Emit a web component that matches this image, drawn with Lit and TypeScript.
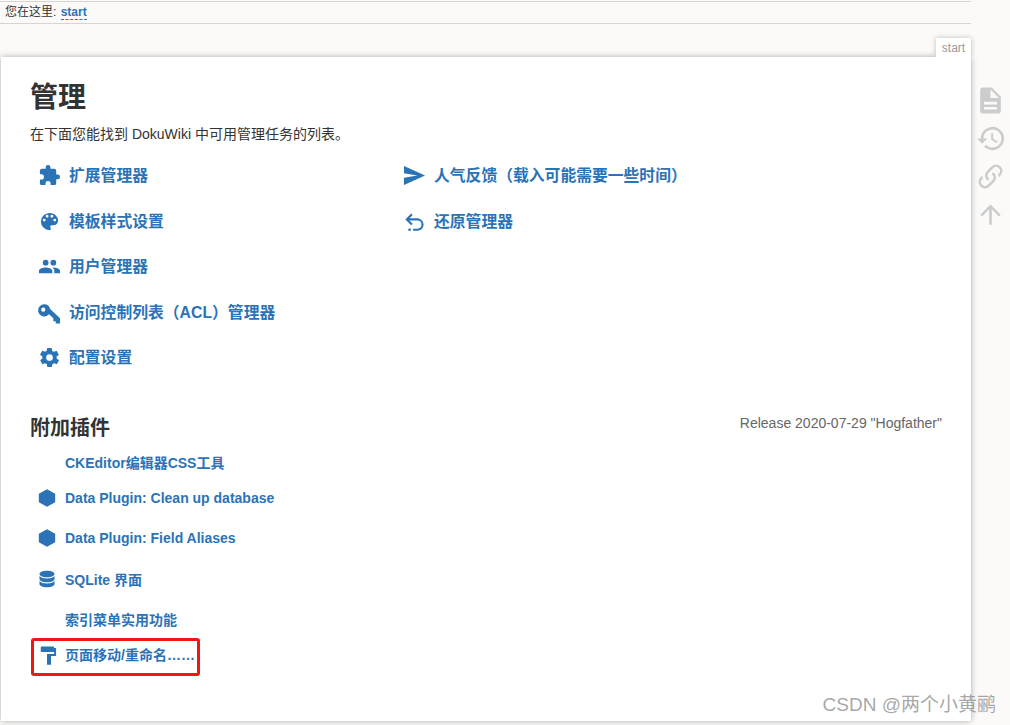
import { LitElement, html, css, svg } from "lit";
import { customElement } from "lit/decorators.js";

const ICONS: Record<string, any> = {
  puzzle: svg`<path d="M20.500 11H19V7a2 2 0 0 0-2-2h-4V3.500a2.500 2.500 0 0 0-5 0V5H4a2 2 0 0 0-2 2v3.800h1.500a2.700 2.700 0 0 1 0 5.400H2V20a2 2 0 0 0 2 2h3.800v-1.500a2.700 2.700 0 0 1 5.400 0V22H17a2 2 0 0 0 2-2v-4h1.500a2.500 2.500 0 0 0 0-5z"/>`,
  palette: svg`<path d="M12 3a9 9 0 0 0 0 18 1.500 1.500 0 0 0 1.100-2.500 1.500 1.500 0 0 1 1.100-2.500H16a5 5 0 0 0 5-5c0-4.400-4-8-9-8zM6.500 12a1.500 1.500 0 1 1 0-3 1.500 1.500 0 0 1 0 3zm3-4a1.500 1.500 0 1 1 0-3 1.500 1.500 0 0 1 0 3zm5 0a1.500 1.500 0 1 1 0-3 1.500 1.500 0 0 1 0 3zm3 4a1.500 1.500 0 1 1 0-3 1.500 1.500 0 0 1 0 3z"/>`,
  users: svg`<path d="M16 11a3 3 0 1 0 0-6 3 3 0 0 0 0 6zm-8 0a3 3 0 1 0 0-6 3 3 0 0 0 0 6zm0 2c-2.300 0-7 1.200-7 3.500V19h14v-2.500C15 14.200 10.300 13 8 13zm8 0h-1c1.200.8 2 2 2 3.500V19h6v-2.500c0-2.300-4.700-3.500-7-3.500z"/>`,
  key: svg`<path fill-rule="evenodd" d="M6.600 3.500a6.300 6.300 0 0 1 6.100 4.900L23 18v5.500h-4.500v-2.500H16v-3l-4.600-4.300A6.300 6.300 0 1 1 6.600 3.500zM5.500 6.800a2.200 2.200 0 1 0 0 4.400 2.200 2.200 0 0 0 0-4.400z"/>`,
  gear: svg`<path d="M12 15.500a3.500 3.500 0 1 1 0-7 3.500 3.500 0 0 1 0 7zm7.400-2.500a7.800 7.800 0 0 0 0-2l2.100-1.600a.5.500 0 0 0 .1-.6l-2-3.500a.5.500 0 0 0-.6-.2l-2.500 1a7.300 7.300 0 0 0-1.700-1l-.4-2.600A.5.500 0 0 0 14 2h-4a.5.500 0 0 0-.5.4l-.4 2.600a7.300 7.300 0 0 0-1.700 1l-2.500-1a.5.500 0 0 0-.6.2l-2 3.500a.5.500 0 0 0 .1.600L4.600 11a7.800 7.800 0 0 0 0 2l-2.100 1.600a.5.500 0 0 0-.1.600l2 3.500c.1.200.4.300.6.200l2.500-1c.5.400 1.100.7 1.700 1l.4 2.600c0 .2.200.4.500.4h4c.3 0 .5-.2.500-.4l.4-2.600c.6-.3 1.200-.6 1.700-1l2.500 1c.2.100.5 0 .6-.2l2-3.500a.5.500 0 0 0-.1-.6z"/>`,
  send: svg`<path d="M1 2L23 12 1 22V14.300L15 12 1 9.700z"/>`,
  undo: svg`<path fill="none" stroke="currentColor" stroke-width="2.200" d="M9.300 4.500L4 9.800l5.300 5.300M4 9.800h11a5.400 5.400 0 0 1 0 10.800h-4.500"/><rect x="5.600" y="19.300" width="2.500" height="2.500"/>`,
  hex: svg`<path d="M12 1.600L21.800 7V17L12 22.400 2.200 17V7z"/>`,
  db: svg`<path d="M12 2C6.500 2 3 3.800 3 6s3.500 4 9 4 9-1.800 9-4-3.500-4-9-4zM3 8.500V12c0 2.200 3.500 4 9 4s9-1.800 9-4V8.500c-1.600 2-5 3-9 3s-7.400-1-9-3zM3 14.500V18c0 2.200 3.500 4 9 4s9-1.800 9-4v-3.500c-1.600 2-5 3-9 3s-7.400-1-9-3z"/>`,
  roller: svg`<path d="M5.500 3H19.500a1 1 0 0 1 1 1v.8h2.400V14.400H16.800V25H12V12h8.500V9H20.500a1 1 0 0 1-1 .6H5.500a1 1 0 0 1-1-1V4a1 1 0 0 1 1-1z"/>`,
  file: svg`<path d="M13 2l7 7v11a2 2 0 0 1-2 2H6a2 2 0 0 1-2-2V4a2 2 0 0 1 2-2h7zm-1 1.500V10h6.500L12 3.500zM7 13v2h10v-2H7zm0 4v2h10v-2H7z" fill-rule="evenodd"/>`,
  history: svg`<path d="M13.500 3a9 9 0 0 0-9 9H1.500l3.900 3.900.1.100L9.500 12h-3a7 7 0 1 1 2 4.900l-1.400 1.400A9 9 0 1 0 13.500 3zM12.500 8v5l4.300 2.500.7-1.200-3.500-2.100V8z"/>`,
  link: svg`<path d="M10.600 13.400a1 1 0 0 1 0 1.400 1 1 0 0 1-1.400 0 5 5 0 0 1 0-7.100l3.500-3.500a5 5 0 0 1 7.100 7.100l-1.500 1.500a7 7 0 0 0-.4-2.400l.5-.5a3 3 0 0 0-4.300-4.300l-3.500 3.500a3 3 0 0 0 0 4.300zm2.800-4.200a1 1 0 0 1 1.400 0 5 5 0 0 1 0 7.100l-3.500 3.500a5 5 0 0 1-7.100-7.100l1.500-1.500a7 7 0 0 0 .4 2.400l-.5.500a3 3 0 0 0 4.300 4.300l3.500-3.500a3 3 0 0 0 0-4.300 1 1 0 0 1 0-1.400z"/>`,
  up: svg`<path d="M13 20h-2V8l-5.500 5.500-1.400-1.400L12 4.200l7.900 7.900-1.400 1.400L13 8z"/>`,
};

const icon = (n: string) =>
  html`<svg class="ico" viewBox="0 0 24 24" aria-hidden="true">${ICONS[n]}</svg>`;

const LEFT: [string, string][] = [
  ["puzzle", "扩展管理器"],
  ["palette", "模板样式设置"],
  ["users", "用户管理器"],
  ["key", "访问控制列表（ACL）管理器"],
  ["gear", "配置设置"],
];
const RIGHT: [string, string][] = [
  ["send", "人气反馈（载入可能需要一些时间）"],
  ["undo", "还原管理器"],
];
const PLUGINS: [string, string, number][] = [
  ["", "CKEditor编辑器CSS工具", 30],
  ["hex", "Data Plugin: Clean up database", 41],
  ["hex", "Data Plugin: Field Aliases", 40],
  ["db", "SQLite 界面", 41],
  ["", "索引菜单实用功能", 39],
  ["roller", "页面移动/重命名……", 32],
];

@customElement("app-root")
export class AppRoot extends LitElement {
  static styles = css`
    :host {
      display: block;
      width: 1010px;
      height: 725px;
      overflow: hidden;
      background: #fbfaf9;
      color: #333;
      font-family: "Liberation Sans", "Noto Sans CJK SC", sans-serif;
      position: relative;
    }
    .crumbs {
      box-sizing: border-box;
      margin-top: 1px;
      width: 971px;
      height: 23px;
      border-top: 1px solid #d8d4cf;
      border-bottom: 1px solid #d8d4cf;
      font-size: 12px;
      line-height: 20px;
      padding-left: 5px;
    }
    .crumbs a {
      color: #2b73b7;
      font-weight: bold;
      border-bottom: 1px dashed #2b73b7;
      margin-left: 1px;
    }
    .wrap {
      display: flex;
      align-items: flex-start;
    }
    .main {
      width: 970px;
      margin-left: 1px;
      position: relative;
      margin-top: 33px;
    }
    .tab {
      position: absolute;
      right: 0;
      top: -19px;
      height: 19px;
      width: 35px;
      background: #fff;
      color: #999;
      font-size: 12px;
      line-height: 20px;
      text-align: center;
      box-shadow: 0 0 5px #bbb;
      clip-path: inset(-6px -6px 0 -6px);
    }
    .page {
      box-sizing: border-box;
      height: 664px;
      background: #fff;
      box-shadow: 0 0 6px #aaa;
      padding: 23px 29px 0;
    }
    h1 {
      margin: 0;
      font-size: 28px;
      line-height: 36px;
      font-weight: bold;
      color: #333;
    }
    .intro {
      margin: 9px 0 0;
      font-size: 14px;
      line-height: 18px;
      color: #333;
    }
    .tasks {
      display: flex;
      margin-top: 10px;
    }
    .col {
      width: 365px;
      display: flex;
      flex-direction: column;
    }
    .task {
      height: 45.5px;
      display: flex;
      align-items: center;
      padding-left: 8px;
      gap: 8px;
      font-size: 15.800px;
      font-weight: bold;
      color: #2b73b7;
    }
    .task span {
      padding-bottom: 2.500px;
    }
    .ico {
      fill: currentColor;
      flex: none;
      overflow: visible;
    }
    .task .ico {
      width: 23px;
      height: 23px;
    }
    .add-head {
      display: flex;
      justify-content: space-between;
      margin-top: 34px;
      height: 24px;
    }
    h2 {
      margin: 0;
      font-size: 20px;
      line-height: 26px;
      font-weight: bold;
      color: #333;
    }
    .ver {
      font-size: 14px;
      line-height: 16px;
      color: #666;
    }
    .plugins {
      margin-top: 8.500px;
      display: flex;
      flex-direction: column;
    }
    .plugin {
      position: relative;
      display: flex;
      align-items: center;
      gap: 8px;
      padding-left: 7px;
      font-size: 14px;
      font-weight: bold;
      color: #2b73b7;
    }
    .plugin .ico {
      width: 20px;
      height: 20px;
    }
    .slot {
      width: 20px;
      height: 20px;
      flex: none;
    }
    .mark {
      position: absolute;
      left: 1px;
      top: 0;
      width: 169px;
      height: 38px;
      border: 3px solid #f5150f;
      border-radius: 3px;
      box-sizing: border-box;
    }
    .side {
      display: flex;
      flex-direction: column;
      align-items: center;
      width: 39px;
      margin-top: 61px;
      gap: 7px;
      color: #ccc;
    }
    .side .ico {
      width: 31px;
      height: 31px;
    }
    .wm {
      position: absolute;
      right: 14px;
      bottom: 8px;
      font-size: 19px;
      line-height: 24px;
      color: rgba(110, 110, 110, 0.62);
      white-space: nowrap;
    }
  `;

  render() {
    const task = ([i, t]: [string, string]) =>
      html`<div class="task">${icon(i)}<span>${t}</span></div>`;
    return html`
      <div class="crumbs">您在这里: <a>start</a></div>
      <div class="wrap">
        <div class="main">
          <div class="tab">start</div>
          <div class="page">
            <h1>管理</h1>
            <p class="intro">在下面您能找到 DokuWiki 中可用管理任务的列表。</p>
            <div class="tasks">
              <div class="col">${LEFT.map(task)}</div>
              <div class="col">${RIGHT.map(task)}</div>
            </div>
            <div class="add-head">
              <h2>附加插件</h2>
              <div class="ver">Release 2020-07-29 "Hogfather"</div>
            </div>
            <div class="plugins">
              ${PLUGINS.map(
                ([i, t, h], n) => html`<div class="plugin" style="height:${h}px">
                  ${i ? icon(i) : html`<span class="slot"></span>`}<span>${t}</span>
                  ${n === 5 ? html`<span class="mark"></span>` : ""}
                </div>`
              )}
            </div>
          </div>
        </div>
        <div class="side">
          ${icon("file")}${icon("history")}${icon("link")}${icon("up")}
        </div>
      </div>
      <div class="wm">CSDN @两个小黄鹂</div>
    `;
  }
}
